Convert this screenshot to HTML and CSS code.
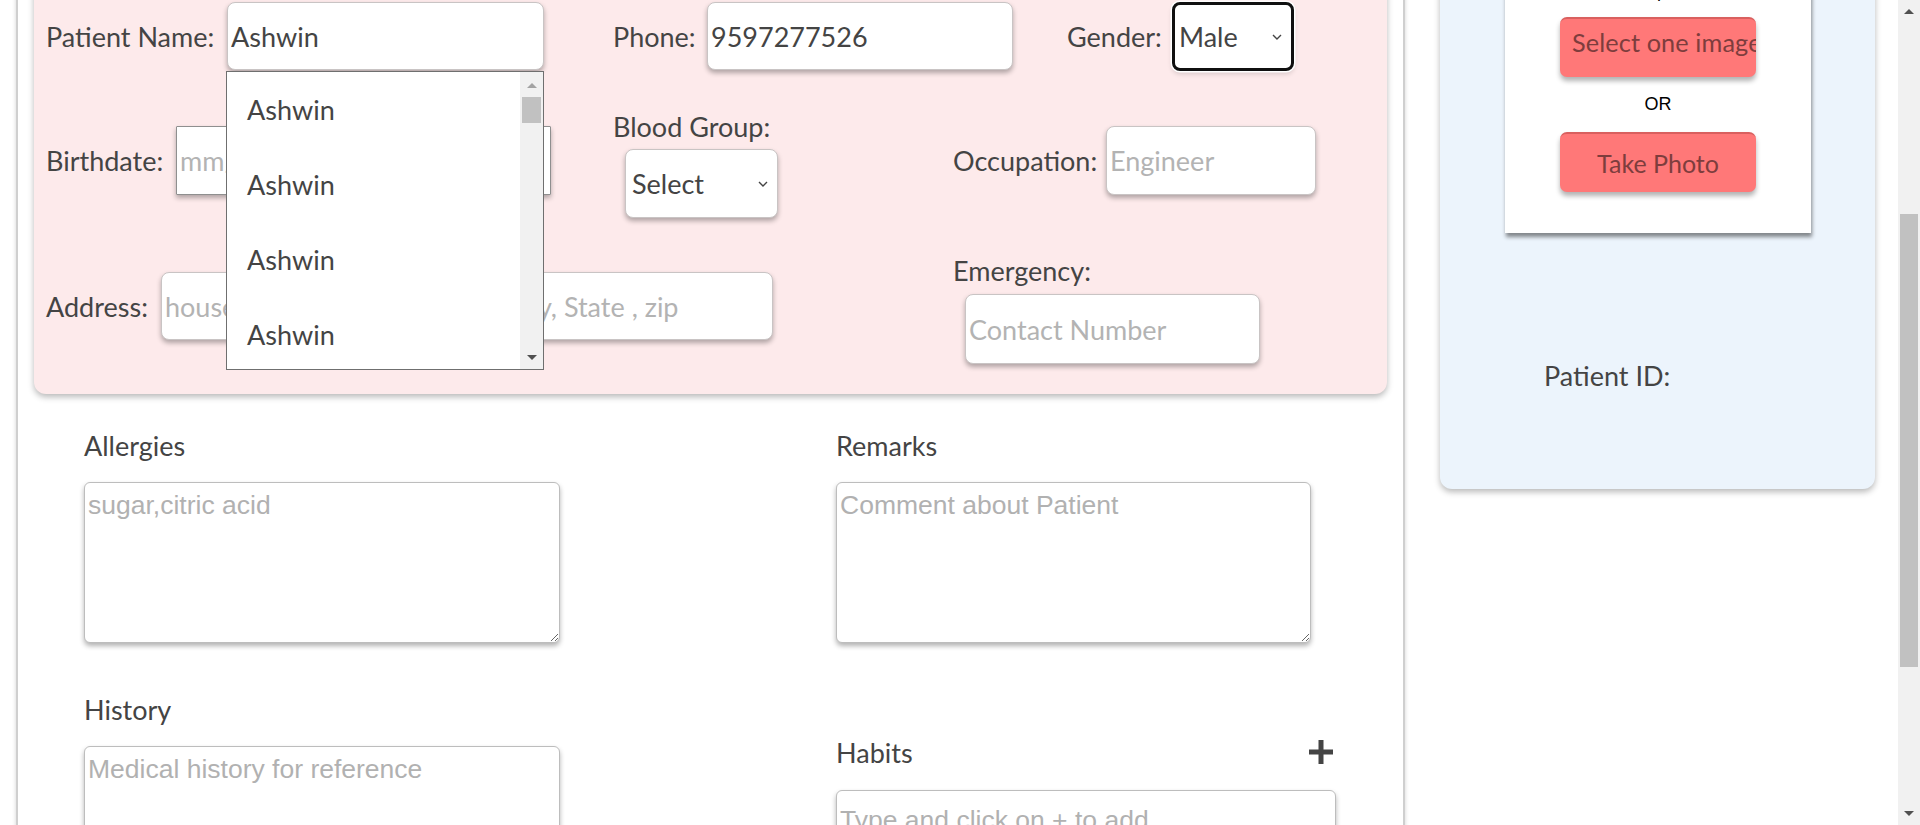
FILE: index.html
```html
<!DOCTYPE html>
<html lang="en">
<head>
<meta charset="utf-8">
<title>Patient</title>
<link rel="stylesheet" href="styles.css">
</head>
<body>
<div class="page">
  <div class="main">
    <div class="pink">
      <div class="form-grid">
        <div class="cell inline">
          <label class="lbl w-pn">Patient Name:</label>
          <div class="combo">
            <input class="inp inp-pn" type="text" value="Ashwin">
            <div class="dropdown">
              <ul class="dd-list">
                <li>Ashwin</li>
                <li>Ashwin</li>
                <li>Ashwin</li>
                <li>Ashwin</li>
              </ul>
              <div class="dd-scroll">
                <span class="arr-up light"></span>
                <span class="dd-thumb"></span>
                <span class="arr-down"></span>
              </div>
            </div>
          </div>
        </div>
        <div class="cell inline">
          <label class="lbl w-ph">Phone:</label>
          <input class="inp inp-ph" type="text" value="9597277526">
        </div>
        <div class="cell inline gender-cell">
          <label class="lbl w-ge">Gender:</label>
          <div class="sel sel-gender focused">
            <span>Male</span>
            <svg class="chev" width="10" height="6" viewBox="0 0 10 6"><path d="M1 1 L5 5 L9 1" fill="none" stroke="#444" stroke-width="1.4"/></svg>
          </div>
        </div>

        <div class="cell inline r2-in">
          <label class="lbl w-bd">Birthdate:</label>
          <input class="inp inp-bd" type="text" placeholder="mm/dd/yyyy">
        </div>
        <div class="cell r2">
          <label class="lbl block">Blood Group:</label>
          <div class="sel sel-blood">
            <span>Select</span>
            <svg class="chev" width="10" height="6" viewBox="0 0 10 6"><path d="M1 1 L5 5 L9 1" fill="none" stroke="#444" stroke-width="1.4"/></svg>
          </div>
        </div>
        <div class="cell inline r2-in">
          <label class="lbl w-oc">Occupation:</label>
          <input class="inp inp-oc" type="text" placeholder="Engineer">
        </div>

        <div class="cell inline r3-in span2">
          <label class="lbl w-ad">Address:</label>
          <input class="inp inp-ad" type="text" placeholder="house no, street name, area, City, State , zip">
        </div>
        <div class="cell r3">
          <label class="lbl block">Emergency:</label>
          <input class="inp inp-em" type="text" placeholder="Contact Number">
        </div>
      </div>
    </div>

    <div class="lower">
      <div class="col">
        <label class="lbl block sec">Allergies</label>
        <textarea class="ta" placeholder="sugar,citric acid"></textarea>
        <label class="lbl block sec hist">History</label>
        <textarea class="ta ta-tall" placeholder="Medical history for reference"></textarea>
      </div>
      <div class="col">
        <label class="lbl block sec">Remarks</label>
        <textarea class="ta" placeholder="Comment about Patient"></textarea>
        <div class="habits-head">
          <label class="lbl">Habits</label>
          <svg class="plus" width="26" height="26" viewBox="0 0 26 26"><rect x="10.5" y="1" width="5" height="24" fill="#444"/><rect x="1" y="10.5" width="24" height="5" fill="#444"/></svg>
        </div>
        <input class="inp inp-hab" type="text" placeholder="Type and click on + to add">
      </div>
    </div>
  </div>

  <aside class="side">
    <div class="blue">
      <div class="card">
        <div class="card-title">Add a picture</div>
        <button class="btn btn-left" type="button">Select one image</button>
        <div class="or">OR</div>
        <button class="btn" type="button">Take Photo</button>
      </div>
      <div class="pid">Patient ID:</div>
    </div>
  </aside>
</div>

<div class="vscroll">
  <span class="arr-up"></span>
  <span class="v-thumb"></span>
  <span class="arr-down"></span>
</div>
</body>
</html>
```

FILE: styles.css
```css
* { box-sizing: border-box; }

html, body {
  margin: 0;
  padding: 0;
  width: 1920px;
  height: 825px;
  overflow: hidden;
  background: #ffffff;
}

body {
  font-family: "Lato", "Open Sans", sans-serif;
  color: #444444;
}

.page {
  display: flex;
  align-items: flex-start;
  margin-top: -60px;
  width: 1898px;
}

/* ---------- main column ---------- */
.main {
  margin-left: 16px;
  width: 1389px;
  min-height: 1100px;
  padding: 30px 16px 0 16px;
  border-left: 2px solid #cfcfcf;
  border-right: 2px solid #cfcfcf;
  box-shadow: 0 0 4px rgba(0, 0, 0, 0.18);
  background: #ffffff;
}

.pink {
  width: 1353px;
  background: #fdeaeb;
  border-radius: 12px;
  box-shadow: 0 3px 6px rgba(0, 0, 0, 0.28);
  padding: 32px 0 30px 12px;
}

.form-grid {
  display: grid;
  grid-template-columns: 567px 340px 1fr;
  align-items: start;
}

.cell.inline {
  display: flex;
  align-items: center;
}

.cell.inline > * { flex-shrink: 0; }

.span2 { grid-column: 1 / 3; }

.gender-cell { padding-left: 114px; }

.r2-in { margin-top: 55px; }
.r2 { margin-top: 39px; }
.r3-in { margin-top: 54px; }
.r3 { margin-top: 36px; }

.lbl {
  font-size: 27px;
  line-height: 33px;
  color: #444444;
  white-space: nowrap;
}

.lbl.block { display: block; }

.w-pn { width: 181px; }
.w-ph { width: 94px; }
.w-ge { width: 105px; }
.w-bd { width: 130px; }
.w-oc { width: 153px; }
.w-ad { width: 115px; }

.inp {
  font-family: "Lato", "Open Sans", sans-serif;
  font-size: 27px;
  color: #444444;
  background: #ffffff;
  border: 1px solid #c9c4c4;
  border-radius: 8px;
  box-shadow: 0 3px 5px rgba(0, 0, 0, 0.3);
  height: 68px;
  padding: 0 3px;
  outline: none;
}

.inp::placeholder { color: #b3b3b3; }

.inp-pn { width: 317px; }
.inp-ph { width: 306px; }
.inp-bd { width: 375px; height: 69px; border-radius: 1px; border-color: #8f8f8f; }
.inp-oc { width: 210px; height: 69px; }
.inp-ad { width: 612px; }
.inp-em { width: 295px; height: 70px; margin: 7px 0 0 12px; display: block; }

/* selects */
.sel {
  position: relative;
  display: flex;
  align-items: center;
  background: #ffffff;
  border: 1px solid #c9c4c4;
  border-radius: 8px;
  box-shadow: 0 3px 5px rgba(0, 0, 0, 0.3);
  font-size: 27px;
  color: #444444;
  padding-left: 6px;
}

.sel .chev {
  position: absolute;
  right: 9px;
  top: 50%;
  margin-top: -3px;
}

.sel-gender {
  width: 122px;
  height: 69px;
}

.sel.focused {
  border: 3px solid #101010;
  box-shadow: 0 0 0 1.5px #ffffff, 0 3px 5px rgba(0, 0, 0, 0.15);
  padding-left: 4px;
}

.sel-blood {
  width: 153px;
  height: 69px;
  margin: 6px 0 0 12px;
}

/* datalist dropdown */
.combo { position: relative; }

.dropdown {
  position: absolute;
  left: -1px;
  top: 69px;
  width: 318px;
  height: 299px;
  background: #ffffff;
  border: 1px solid #6f6f6f;
  overflow: hidden;
  z-index: 5;
}

.dd-list {
  list-style: none;
  margin: 0;
  padding: 0;
}

.dd-list li {
  height: 75px;
  line-height: 75px;
  padding-left: 20px;
  font-size: 27px;
  color: #444444;
}

.dd-list li:last-child { height: 72px; }

.dd-scroll {
  position: absolute;
  top: 0;
  right: 0;
  width: 23px;
  height: 100%;
  background: #f1f1f1;
}

.dd-thumb {
  position: absolute;
  left: 2px;
  top: 25px;
  width: 19px;
  height: 26px;
  background: #c1c1c1;
}

.dd-scroll .arr-up { top: 11px; }
.dd-scroll .arr-down { bottom: 9px; }

.arr-up, .arr-down {
  position: absolute;
  left: 50%;
  margin-left: -5px;
  width: 0;
  height: 0;
  border-left: 5px solid transparent;
  border-right: 5px solid transparent;
}

.arr-up { border-bottom: 5px solid #505050; }
.arr-up.light { border-bottom-color: #a3a3a3; }
.arr-down { border-top: 5px solid #505050; }

/* lower fields */
.lower {
  display: grid;
  grid-template-columns: 752px 1fr;
  padding-left: 50px;
  margin-top: 35px;
}

.col { display: flex; flex-direction: column; align-items: flex-start; }

.sec { margin-bottom: 19.5px; }
.hist { margin-top: 50px; margin-bottom: 20px; }

.ta {
  font-family: "Liberation Sans", Arial, sans-serif;
  font-size: 26.5px;
  color: #444444;
  width: 476px;
  height: 161px;
  padding: 7px 3px 5px 3px;
  border: 1px solid #bdbdbd;
  border-radius: 6px;
  box-shadow: 0 3px 5px rgba(0, 0, 0, 0.3);
  background: #ffffff;
  outline: none;
}

.col + .col .ta { width: 475px; }

.ta::placeholder { color: #b1b1b1; }

.ta-tall { height: 200px; }

.habits-head {
  margin-top: 93px;
  width: 498px;
  display: flex;
  justify-content: space-between;
  align-items: center;
}

.inp-hab {
  margin-top: 21px;
  width: 500px;
  height: 62px;
  border-radius: 6px;
  border-color: #bdbdbd;
  font-family: "Liberation Sans", Arial, sans-serif;
  font-size: 26.5px;
}

.inp-hab::placeholder { color: #b1b1b1; }

/* ---------- side column ---------- */
.side {
  margin-left: 35px;
  width: 435px;
  padding-top: 30px;
}

.blue {
  background: #ecf4fc;
  border-radius: 12px;
  box-shadow: 0 3px 6px rgba(0, 0, 0, 0.28);
  padding: 10px 0 97px 0;
}

.card {
  margin-left: 65px;
  width: 306px;
  background: #ffffff;
  box-shadow: 1px 4px 4px rgba(0, 0, 0, 0.45);
  padding: 0 0 41px 55px;
}

.card-title {
  font-family: "Liberation Sans", Arial, sans-serif;
  font-size: 18px;
  line-height: 22px;
  height: 24px;
  width: 196px;
  text-align: center;
  color: #000000;
  overflow: hidden;
}

.btn {
  display: flex;
  align-items: center;
  justify-content: center;
  width: 196px;
  height: 60px;
  margin-top: 13px;
  background: #ff7878;
  border: none;
  border-top: 2px solid #d9605f;
  border-radius: 7px;
  box-shadow: 0 4px 5px rgba(0, 0, 0, 0.3);
  font-family: "Lato", "Open Sans", sans-serif;
  font-size: 25px;
  color: #7e3d3d;
  overflow: hidden;
  white-space: nowrap;
  padding: 0;
}

.btn-left {
  justify-content: flex-start;
  padding-left: 12px;
  padding-bottom: 13px;
  font-size: 25.3px;
  letter-spacing: 0.1px;
}

.or {
  width: 196px;
  text-align: center;
  margin-top: 16px;
  font-family: "Liberation Sans", Arial, sans-serif;
  font-size: 18px;
  line-height: 22px;
  color: #000000;
}

.or + .btn { margin-top: 17px; }

.pid {
  margin: 126px 0 0 104px;
  font-size: 27px;
  line-height: 33px;
  color: #444444;
}

/* ---------- page scrollbar ---------- */
.vscroll {
  position: fixed;
  top: 0;
  right: 0;
  width: 22px;
  height: 825px;
  background: #f1f1f1;
}

.vscroll .arr-up { top: 9px; }
.vscroll .arr-down { bottom: 9px; }

.v-thumb {
  position: absolute;
  left: 2px;
  top: 214px;
  width: 18px;
  height: 453px;
  background: #c1c1c1;
}
```
